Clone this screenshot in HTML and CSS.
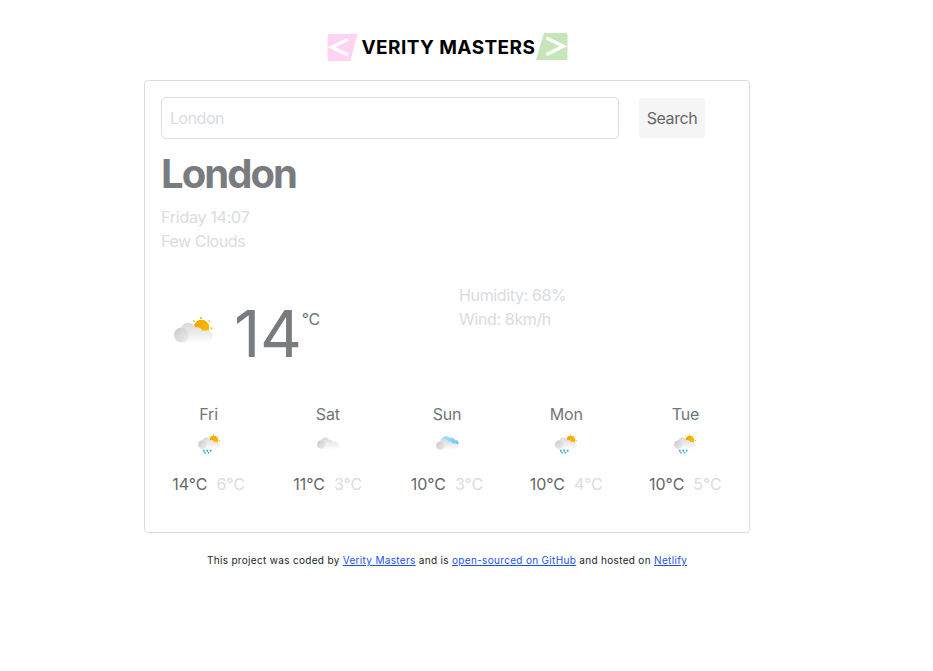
FILE: index.html
```html
<!DOCTYPE html>
<html lang="en">
<head>
<meta charset="utf-8">
<title>Weather</title>
<link rel="stylesheet" href="styles.css">
</head>
<body>
<svg class="defs" width="0" height="0" aria-hidden="true">
  <defs>
    <linearGradient id="back" x1="0" y1="0" x2="0" y2="1"><stop offset="0" stop-color="#d8d8d8"/><stop offset="1" stop-color="#fefefe"/></linearGradient>
    <linearGradient id="front" x1="0" y1="0" x2="1" y2="1"><stop offset="0" stop-color="#c9c9c9"/><stop offset="1" stop-color="#eeeeee"/></linearGradient>
    <linearGradient id="sunfill" x1="0" y1="0" x2="1" y2="1"><stop offset="0" stop-color="#f2a000"/><stop offset="1" stop-color="#ffc400"/></linearGradient>
    <linearGradient id="sky" x1="0" y1="0" x2="1" y2="1"><stop offset="0" stop-color="#b5e6ff"/><stop offset="1" stop-color="#63c2fa"/></linearGradient>
    <g id="cloud">
      <path d="M7 11C9.500 4.500 18 4 21.500 10.500C24.500 9.500 27.500 11 28.500 14C33.500 12.500 38.500 14.500 38.500 19.500C38.500 23 36 25.500 32 25.500H7Z" fill="url(#back)"/>
      <circle cx="7.500" cy="18" r="7.500" fill="url(#front)"/>
    </g>
    <g id="sun">
      <circle cx="27.500" cy="10.500" r="7.800" fill="url(#sunfill)"/>
      <path d="M27 0V2M19.300 3.500L20.600 4.800M34.500 4.800L35.700 3.600M36.500 11.300H38.500" stroke="#fbb914" stroke-width="1.600"/>
    </g>
    <g id="rain" fill="#35a5dc">
      <path d="M8 27h3.500v3l-2 1zM14 27h3.500v3l-2 1zM20 27h3.500v3l-2 1zM11 31h2.500v2.500h-2.500zM17 31h2.500v2.500h-2.500z"/>
    </g>
    <g id="sunny-rain"><use href="#sun"/><use href="#cloud"/><use href="#rain"/></g>
  </defs>
</svg>
<header class="brand">
  <svg class="mark" width="31" height="28" viewBox="0 0 31 28"><path d="M2 1H30.500L23.500 28H2Q.500 28 .500 26V3Q.500 1 2 1Z" fill="#ffd3f1"/><path d="M21 6.500L4.500 14.300L21 22" fill="none" stroke="#fff" stroke-width="3.400"/></svg>
  <span class="name">VERITY MASTERS</span>
  <svg class="mark" width="32" height="28" viewBox="0 0 32 28"><path d="M8 0H30Q31.500 0 31.500 2V25.500Q31.500 27 30 27H0Z" fill="#c6e5b9"/><path d="M10.500 5L27.500 13.200L10.500 21.500" fill="none" stroke="#fff" stroke-width="3.400"/></svg>
</header>
<main class="card">
  <form class="search">
    <input class="field" type="text" placeholder="London">
    <button class="button" type="button">Search</button>
  </form>
  <h1 class="city">London</h1>
  <div class="muted"><div>Friday 14:07</div><div class="sky">Few Clouds</div></div>
  <section class="current">
    <div class="now">
      <svg class="icon-big" width="40" height="26" viewBox="0 0 40 26"><use href="#sun"/><use href="#cloud"/></svg>
      <span class="degrees">14</span><span class="unit">°C</span>
    </div>
    <div class="muted details"><div>Humidity: 68%</div><div>Wind: 8km/h</div></div>
  </section>
  <section class="forecast">
    <div class="day"><div>Fri</div><svg class="icon" viewBox="0 0 40 34"><use href="#sunny-rain"/></svg><div class="temps"><span>14°C</span><span class="low">6°C</span></div></div>
    <div class="day"><div>Sat</div><svg class="icon" viewBox="0 0 40 34"><use href="#cloud"/></svg><div class="temps"><span>11°C</span><span class="low">3°C</span></div></div>
    <div class="day"><div>Sun</div><svg class="icon" viewBox="0 0 40 34"><path d="M8 11C11 2 19 1 24 6C29 5 32 8 33 10C38 9 41 14 38 18H13Z" fill="url(#sky)"/><use href="#cloud" transform="translate(0 2)"/></svg><div class="temps"><span>10°C</span><span class="low">3°C</span></div></div>
    <div class="day"><div>Mon</div><svg class="icon" viewBox="0 0 40 34"><use href="#sunny-rain"/></svg><div class="temps"><span>10°C</span><span class="low">4°C</span></div></div>
    <div class="day"><div>Tue</div><svg class="icon" viewBox="0 0 40 34"><use href="#sunny-rain"/></svg><div class="temps"><span>10°C</span><span class="low">5°C</span></div></div>
  </section>
</main>
<footer class="credit">This project was coded by <a href="#">Verity Masters</a> and is <a href="#">open-sourced on GitHub</a> and hosted on <a href="#">Netlify</a></footer>
</body>
</html>
```
FILE: styles.css
```css
* { box-sizing: border-box; }
body { width: 606px; margin: 0 0 0 144px; padding-top: 33px; background: #fff; color: #70757a; font: 16px/24px Inter, "Liberation Sans", sans-serif; letter-spacing: -0.2px; }
.defs { display: block; }
.brand { display: flex; justify-content: center; height: 47px; align-items: flex-start; }
.mark { flex: none; }
.name { width: 178px; padding-left: 4px; color: #000; font-size: 19px; line-height: 29px; font-weight: 700; letter-spacing: 0.42px; white-space: nowrap; }
.card { height: 453px; padding: 16px; border: 1px solid #dadce3; border-radius: 4px; }
.search { display: flex; gap: 20px; align-items: center; height: 42px; }
.field { width: 458px; height: 42px; padding: 0 8px; border: 1px solid #dadce3; border-radius: 5px; font: inherit; letter-spacing: -0.5px; }
.field::placeholder { color: #d9dce2; opacity: 1; }
.button { width: 66px; height: 40px; padding: 0; border: 0; border-radius: 4px; background: #f5f5f5; color: #666; font: inherit; letter-spacing: -0.4px; }
.city { margin: 11px 0 7px; color: #787c7f; font-size: 40px; line-height: 48px; font-weight: 700; letter-spacing: -1.95px; }
.muted { color: #d9dce2; letter-spacing: -0.25px; }
.sky { letter-spacing: -0.4px; }
.current { display: grid; grid-template-columns: 298px 1fr; height: 119px; margin-top: 30px; }
.details { letter-spacing: -0.36px; }
.now { display: flex; align-items: flex-start; padding: 14px 0 0 13px; }
.icon-big { margin-top: 20px; }
.degrees { margin: 1px 0 0 20px; color: #787c7f; font-size: 65px; line-height: 72px; letter-spacing: -0.4px; }
.unit { margin-top: 10px; }
.forecast { display: grid; grid-template-columns: repeat(5, 1fr); margin: 0 -12px; text-align: center; }
.day { display: flex; flex-direction: column; align-items: center; }
.icon { width: 23px; height: 20px; margin: 8px 0 18px 1px; }
.temps { display: flex; gap: 9px; color: #666; letter-spacing: -0.05px; }
.low { color: #d9dce2; }
.credit { margin-top: 17px; text-align: center; color: #212529; font-size: 10px; line-height: 20px; letter-spacing: 0.32px; white-space: nowrap; }
.credit a { color: #1a50f0; text-decoration: underline; }
```
